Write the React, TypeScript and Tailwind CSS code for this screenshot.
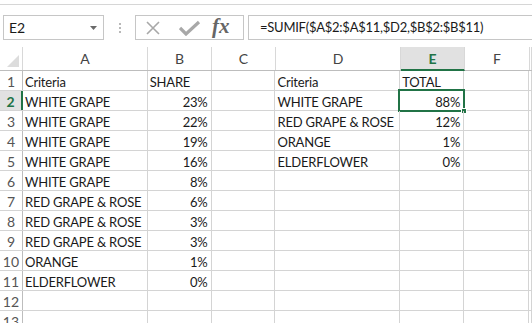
import React from 'react';

const cols = [
  { key: 'A', w: 'w-[125px]' },
  { key: 'B', w: 'w-[64px]' },
  { key: 'C', w: 'w-[64px]' },
  { key: 'D', w: 'w-[125px]' },
  { key: 'E', w: 'w-[64px]' },
  { key: 'F', w: 'w-[65px]' },
  { key: 'G', w: 'flex-1' },
];

const source = [
  ['WHITE GRAPE', '23%'],
  ['WHITE GRAPE', '22%'],
  ['WHITE GRAPE', '19%'],
  ['WHITE GRAPE', '16%'],
  ['WHITE GRAPE', '8%'],
  ['RED GRAPE & ROSE', '6%'],
  ['RED GRAPE & ROSE', '3%'],
  ['RED GRAPE & ROSE', '3%'],
  ['ORANGE', '1%'],
  ['ELDERFLOWER', '0%'],
];

const totals = [
  ['WHITE GRAPE', '88%'],
  ['RED GRAPE & ROSE', '12%'],
  ['ORANGE', '1%'],
  ['ELDERFLOWER', '0%'],
];

function cellValue(row: number, col: string): { text: string; right?: boolean } {
  if (row === 1) {
    if (col === 'A') return { text: 'Criteria' };
    if (col === 'B') return { text: 'SHARE' };
    if (col === 'D') return { text: 'Criteria' };
    if (col === 'E') return { text: 'TOTAL' };
    return { text: '' };
  }
  const s = source[row - 2];
  if (s) {
    if (col === 'A') return { text: s[0] };
    if (col === 'B') return { text: s[1], right: true };
  }
  const t = totals[row - 2];
  if (t) {
    if (col === 'D') return { text: t[0] };
    if (col === 'E') return { text: t[1], right: true };
  }
  return { text: '' };
}

export default function App() {
  const rows = Array.from({ length: 13 }, (_, i) => i + 1);

  return (
    <div className="w-[532px] h-[323px] overflow-hidden bg-white text-[#1a1a1a] font-['Lato',sans-serif]">
      {/* top strip */}
      <div className="h-[5px] border-b border-[#d6d6d6]" />

      {/* formula bar */}
      <div className="flex items-stretch h-[25px] mt-[10px] mb-[7px]">
        <div className="ml-[3px] w-[101px] border border-[#c6c6c6] flex items-center justify-between pl-[5px] pr-[6px]">
          <span className="text-[14px] tracking-[-0.2px]">E2</span>
          <svg width="7" height="4" viewBox="0 0 7 4">
            <path d="M0 0 L7 0 L3.5 4 Z" fill="#6a6a6a" />
          </svg>
        </div>
        <div className="w-[31px] flex flex-col items-center justify-center gap-[2px]">
          <span className="w-[2px] h-[2px] bg-[#b8b8b8]" />
          <span className="w-[2px] h-[2px] bg-[#b8b8b8]" />
          <span className="w-[2px] h-[2px] bg-[#b8b8b8]" />
        </div>
        <div className="w-[109px] border border-[#c6c6c6] flex items-center pl-[9px]">
          <svg width="16" height="16" viewBox="0 0 16 16">
            <path d="M2 2 L14 14 M14 2 L2 14" stroke="#a8a8a8" strokeWidth="1.6" />
          </svg>
          <svg className="ml-[18px]" width="22" height="16" viewBox="0 0 22 16">
            <path d="M1 8 L7 14 L20 2" stroke="#a8a8a8" strokeWidth="3.2" fill="none" />
          </svg>
          <span className="ml-[11px] text-[#666] italic font-bold text-[21px] leading-none font-['Liberation_Serif',serif] -mt-[3px]">
            fx
          </span>
        </div>
        <div className="ml-[4px] flex-1 border-l border-y border-[#c6c6c6] flex items-center pl-[11px]">
          <span className="text-[13px] tracking-[-0.25px]">=SUMIF($A$2:$A$11,$D2,$B$2:$B$11)</span>
        </div>
      </div>

      {/* sheet */}
      <div className="flex flex-col">
        {/* column header */}
        <div className="flex h-[24px] border-b border-[#bdbdbd]">
          <div className="w-[23px] border-r border-[#d8d8d8] relative">
            <svg className="absolute right-[3px] bottom-[3px]" width="12" height="12" viewBox="0 0 12 12">
              <path d="M12 0 L12 12 L0 12 Z" fill="#dcdcdc" />
            </svg>
          </div>
          {cols.map((c) => {
            const sel = c.key === 'E';
            return (
              <div
                key={c.key}
                className={`${c.w} flex items-center justify-center border-r border-[#d8d8d8] text-[14px] ${
                  sel ? 'bg-[#e1e1e1] text-[#217346] font-bold border-b-2 border-b-[#217346] -mb-[1px]' : 'text-[#444]'
                }`}
              >
                {c.key !== 'G' ? c.key : ''}
              </div>
            );
          })}
        </div>

        {rows.map((r) => {
          const selRow = r === 2;
          return (
            <div key={r} className="flex h-[20px] border-b border-[#d4d4d4]">
              <div
                className={`w-[23px] flex items-end justify-center pb-[1px] text-[14px] leading-none ${
                  selRow
                    ? 'bg-[#e1e1e1] text-[#217346] font-bold border-r-2 border-[#217346]'
                    : 'text-[#555] border-r border-[#bdbdbd]'
                }`}
              >
                {r}
              </div>
              {cols.map((c) => {
                const v = cellValue(r, c.key);
                const sel = selRow && c.key === 'E';
                return (
                  <div
                    key={c.key}
                    className={`${c.w} relative flex items-end pb-[1px] border-r border-[#d4d4d4] text-[13px] tracking-[-0.2px] leading-none whitespace-nowrap ${
                      v.right ? 'justify-end pr-[3px]' : 'pl-[2px]'
                    }`}
                  >
                    {v.text}
                    {sel && (
                      <div className="absolute -left-[2px] -top-[2px] w-[67px] h-[23px] border-2 border-[#217346]">
                        <div className="absolute -right-[4px] -bottom-[4px] w-[6px] h-[6px] bg-[#217346] border border-white" />
                      </div>
                    )}
                  </div>
                );
              })}
            </div>
          );
        })}
      </div>
    </div>
  );
}
